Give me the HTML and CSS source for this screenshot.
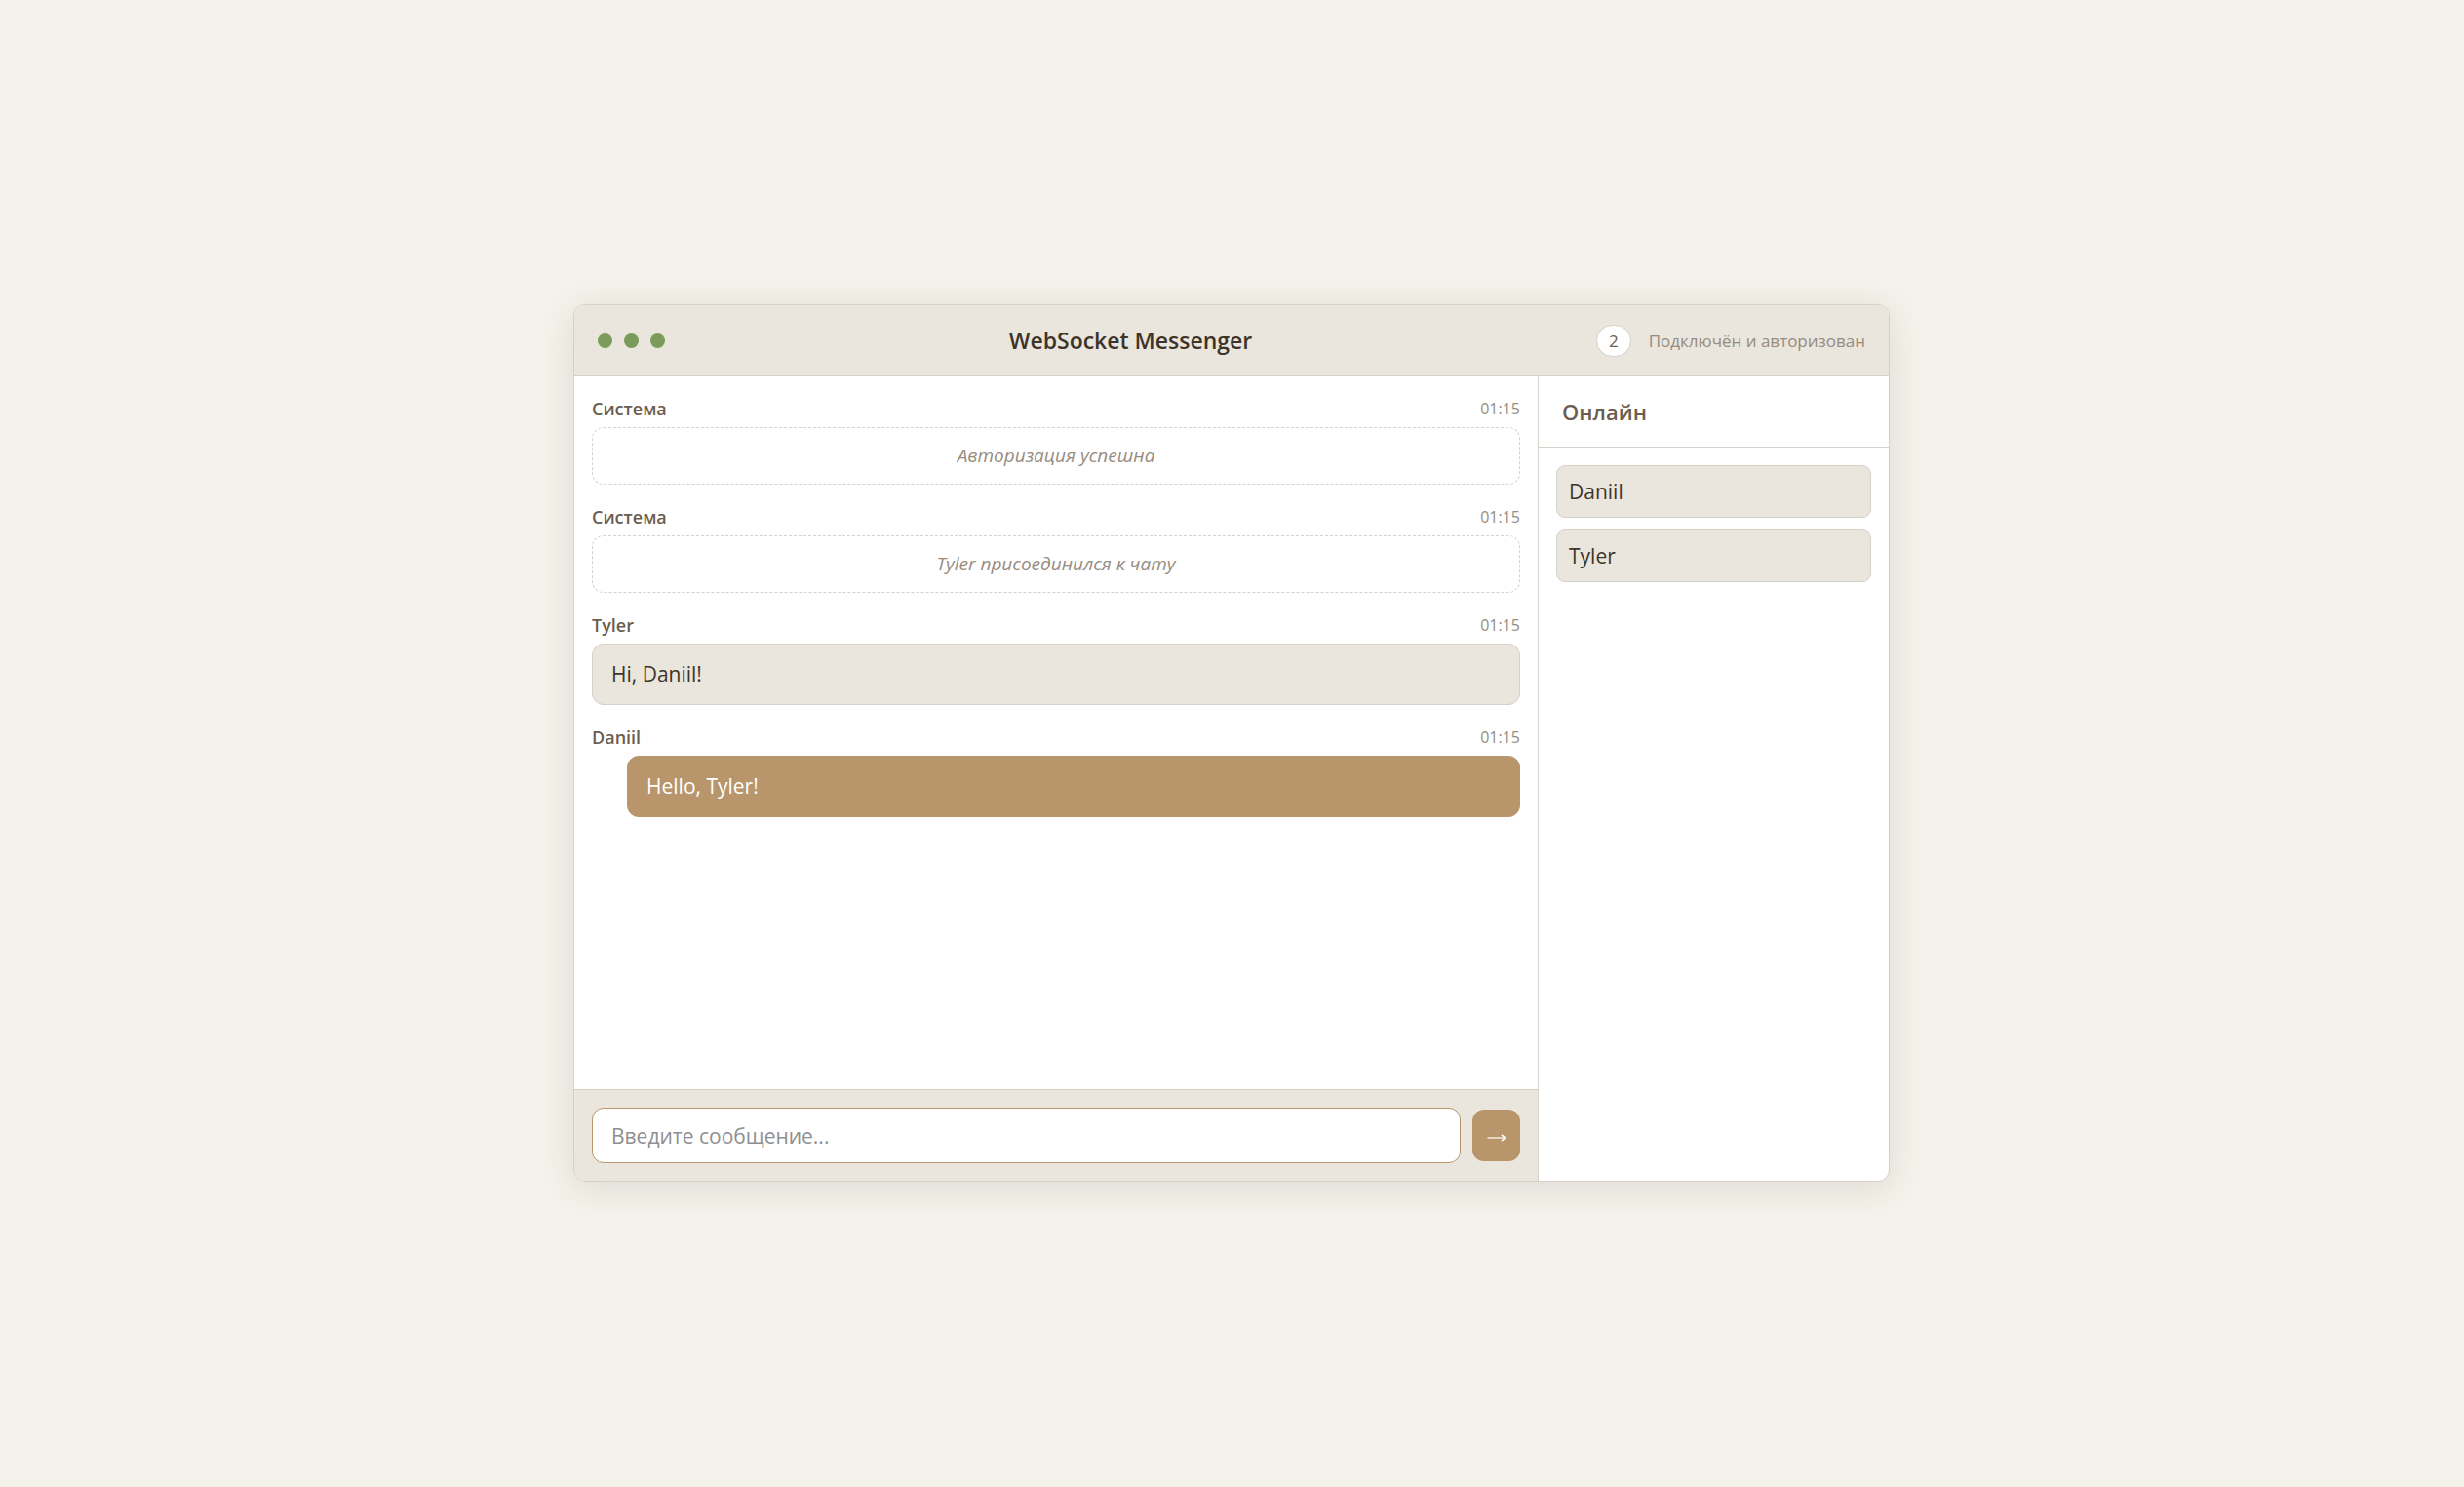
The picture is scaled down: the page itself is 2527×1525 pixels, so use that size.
FILE: index.html
```html
<!DOCTYPE html>
<html lang="ru">
<head>
<meta charset="utf-8">
<meta name="viewport" content="width=device-width, initial-scale=1">
<title>WebSocket Messenger</title>
<link rel="stylesheet" href="styles.css">
</head>
<body>
<main class="window">
  <header class="titlebar">
    <div class="dots" aria-hidden="true"><span class="dot"></span><span class="dot"></span><span class="dot"></span></div>
    <h1 class="title">WebSocket Messenger</h1>
    <div class="status"><span class="count">2</span><span class="status-text">Подключён и авторизован</span></div>
  </header>
  <div class="body">
    <section class="chat">
      <div class="messages">
        <article class="message">
          <div class="meta"><span class="author">Система</span><time class="time">01:15</time></div>
          <p class="bubble bubble-system">Авторизация успешна</p>
        </article>
        <article class="message">
          <div class="meta"><span class="author">Система</span><time class="time">01:15</time></div>
          <p class="bubble bubble-system">Tyler присоединился к чату</p>
        </article>
        <article class="message">
          <div class="meta"><span class="author">Tyler</span><time class="time">01:15</time></div>
          <p class="bubble">Hi, Daniil!</p>
        </article>
        <article class="message">
          <div class="meta"><span class="author">Daniil</span><time class="time">01:15</time></div>
          <p class="bubble bubble-own">Hello, Tyler!</p>
        </article>
      </div>
      <form class="composer">
        <input class="field" type="text" placeholder="Введите сообщение..." aria-label="Введите сообщение">
        <button class="send" type="button" aria-label="Отправить">
          <svg width="20" height="10" viewBox="0 0 20 10" fill="none" stroke="currentColor" stroke-width="1.2" aria-hidden="true"><path d="M0.5 5H18"/><path d="M15 1.8L18.6 5L15 8.2" stroke-width="1.6"/></svg>
        </button>
      </form>
    </section>
    <aside class="sidebar">
      <h2 class="sidebar-title">Онлайн</h2>
      <ul class="users">
        <li class="user">Daniil</li>
        <li class="user">Tyler</li>
      </ul>
    </aside>
  </div>
</main>
</body>
</html>
```
FILE: styles.css
```css
:root {
  --page: #f5f2eb;
  --panel: #eae5dd;
  --line: #d5d0c8;
  --ink: #3d3529;
  --ink-soft: #6b5d4f;
  --muted: #968c80;
  --accent: #b8956a;
  --green: #7a9b5a;
}

* { box-sizing: border-box; }

body {
  display: flex;
  align-items: center;
  justify-content: center;
  min-height: 100vh;
  margin: 0;
  padding: 24px 25px 25px 24px;
  background: var(--page);
  color: var(--ink);
  font-family: "Open Sans", "Noto Sans", sans-serif;
  font-size: 21px;
  line-height: 31px;
}

.window {
  display: flex;
  flex-direction: column;
  width: 100%;
  max-width: 1350px;
  min-height: 900px;
  border: 1px solid var(--line);
  border-radius: 12px;
  background: #fff;
  box-shadow: 0 6px 36px rgba(61, 53, 41, 0.12);
  overflow: hidden;
}

.titlebar {
  display: flex;
  align-items: center;
  justify-content: space-between;
  height: 73px;
  padding: 0 24px;
  border-bottom: 1px solid var(--line);
  background: var(--panel);
}

.dots { display: flex; gap: 12px; }

.dot {
  width: 15px;
  height: 15px;
  border-radius: 50%;
  background: var(--green);
}

.title {
  margin: 0;
  font-size: 23px;
  font-weight: 600;
}

.status {
  display: flex;
  align-items: center;
  gap: 18px;
  color: var(--muted);
  font-size: 17px;
}

.count {
  padding: 0 12px;
  border: 1px solid var(--line);
  border-radius: 18px;
  background: #fff;
  color: var(--ink-soft);
}

.body { display: flex; flex: 1; }

.chat {
  display: flex;
  flex: 1;
  flex-direction: column;
}

.messages {
  display: flex;
  flex: 1;
  flex-direction: column;
  gap: 18px;
  padding: 18px;
}

.meta {
  display: flex;
  align-items: center;
  justify-content: space-between;
  margin-bottom: 4px;
  font-size: 18px;
  line-height: 30px;
}

.author {
  color: var(--ink-soft);
  font-weight: 600;
}

.time {
  color: var(--muted);
  font-size: 16px;
}

.bubble {
  margin: 0;
  padding: 15px 19px;
  border: 1px solid var(--line);
  border-radius: 12px;
  background: var(--panel);
}

.bubble-system {
  border-style: dashed;
  background: none;
  color: var(--muted);
  font-size: 19px;
  font-style: italic;
  line-height: 27px;
  text-align: center;
}

.bubble-own {
  margin-left: 36px;
  border-color: var(--accent);
  background: var(--accent);
  color: #fff;
}

.composer {
  display: flex;
  align-items: center;
  gap: 12px;
  padding: 18px;
  border-top: 1px solid var(--line);
  background: var(--panel);
}

.field {
  flex: 1;
  min-width: 0;
  height: 57px;
  padding: 0 19px;
  border: 1px solid var(--accent);
  border-radius: 12px;
  background: #fff;
  color: var(--ink);
  font: inherit;
}

.field::placeholder { color: #8f8f8f; opacity: 1; }

.send {
  display: grid;
  place-items: center;
  width: 49px;
  height: 53px;
  padding: 5px 0 0;
  border: 0;
  border-radius: 12px;
  background: var(--accent);
  color: #fff;
}

.sidebar {
  width: 360px;
  border-left: 1px solid var(--line);
}

.sidebar-title {
  margin: 0;
  padding: 21px 24px 20px;
  border-bottom: 1px solid var(--line);
  color: var(--ink-soft);
  font-size: 22px;
  font-weight: 600;
}

.users {
  display: flex;
  flex-direction: column;
  gap: 12px;
  margin: 0;
  padding: 18px;
  list-style: none;
}

.user {
  padding: 11px 12px;
  border: 1px solid var(--line);
  border-radius: 9px;
  background: var(--panel);
  line-height: 30px;
}
```
